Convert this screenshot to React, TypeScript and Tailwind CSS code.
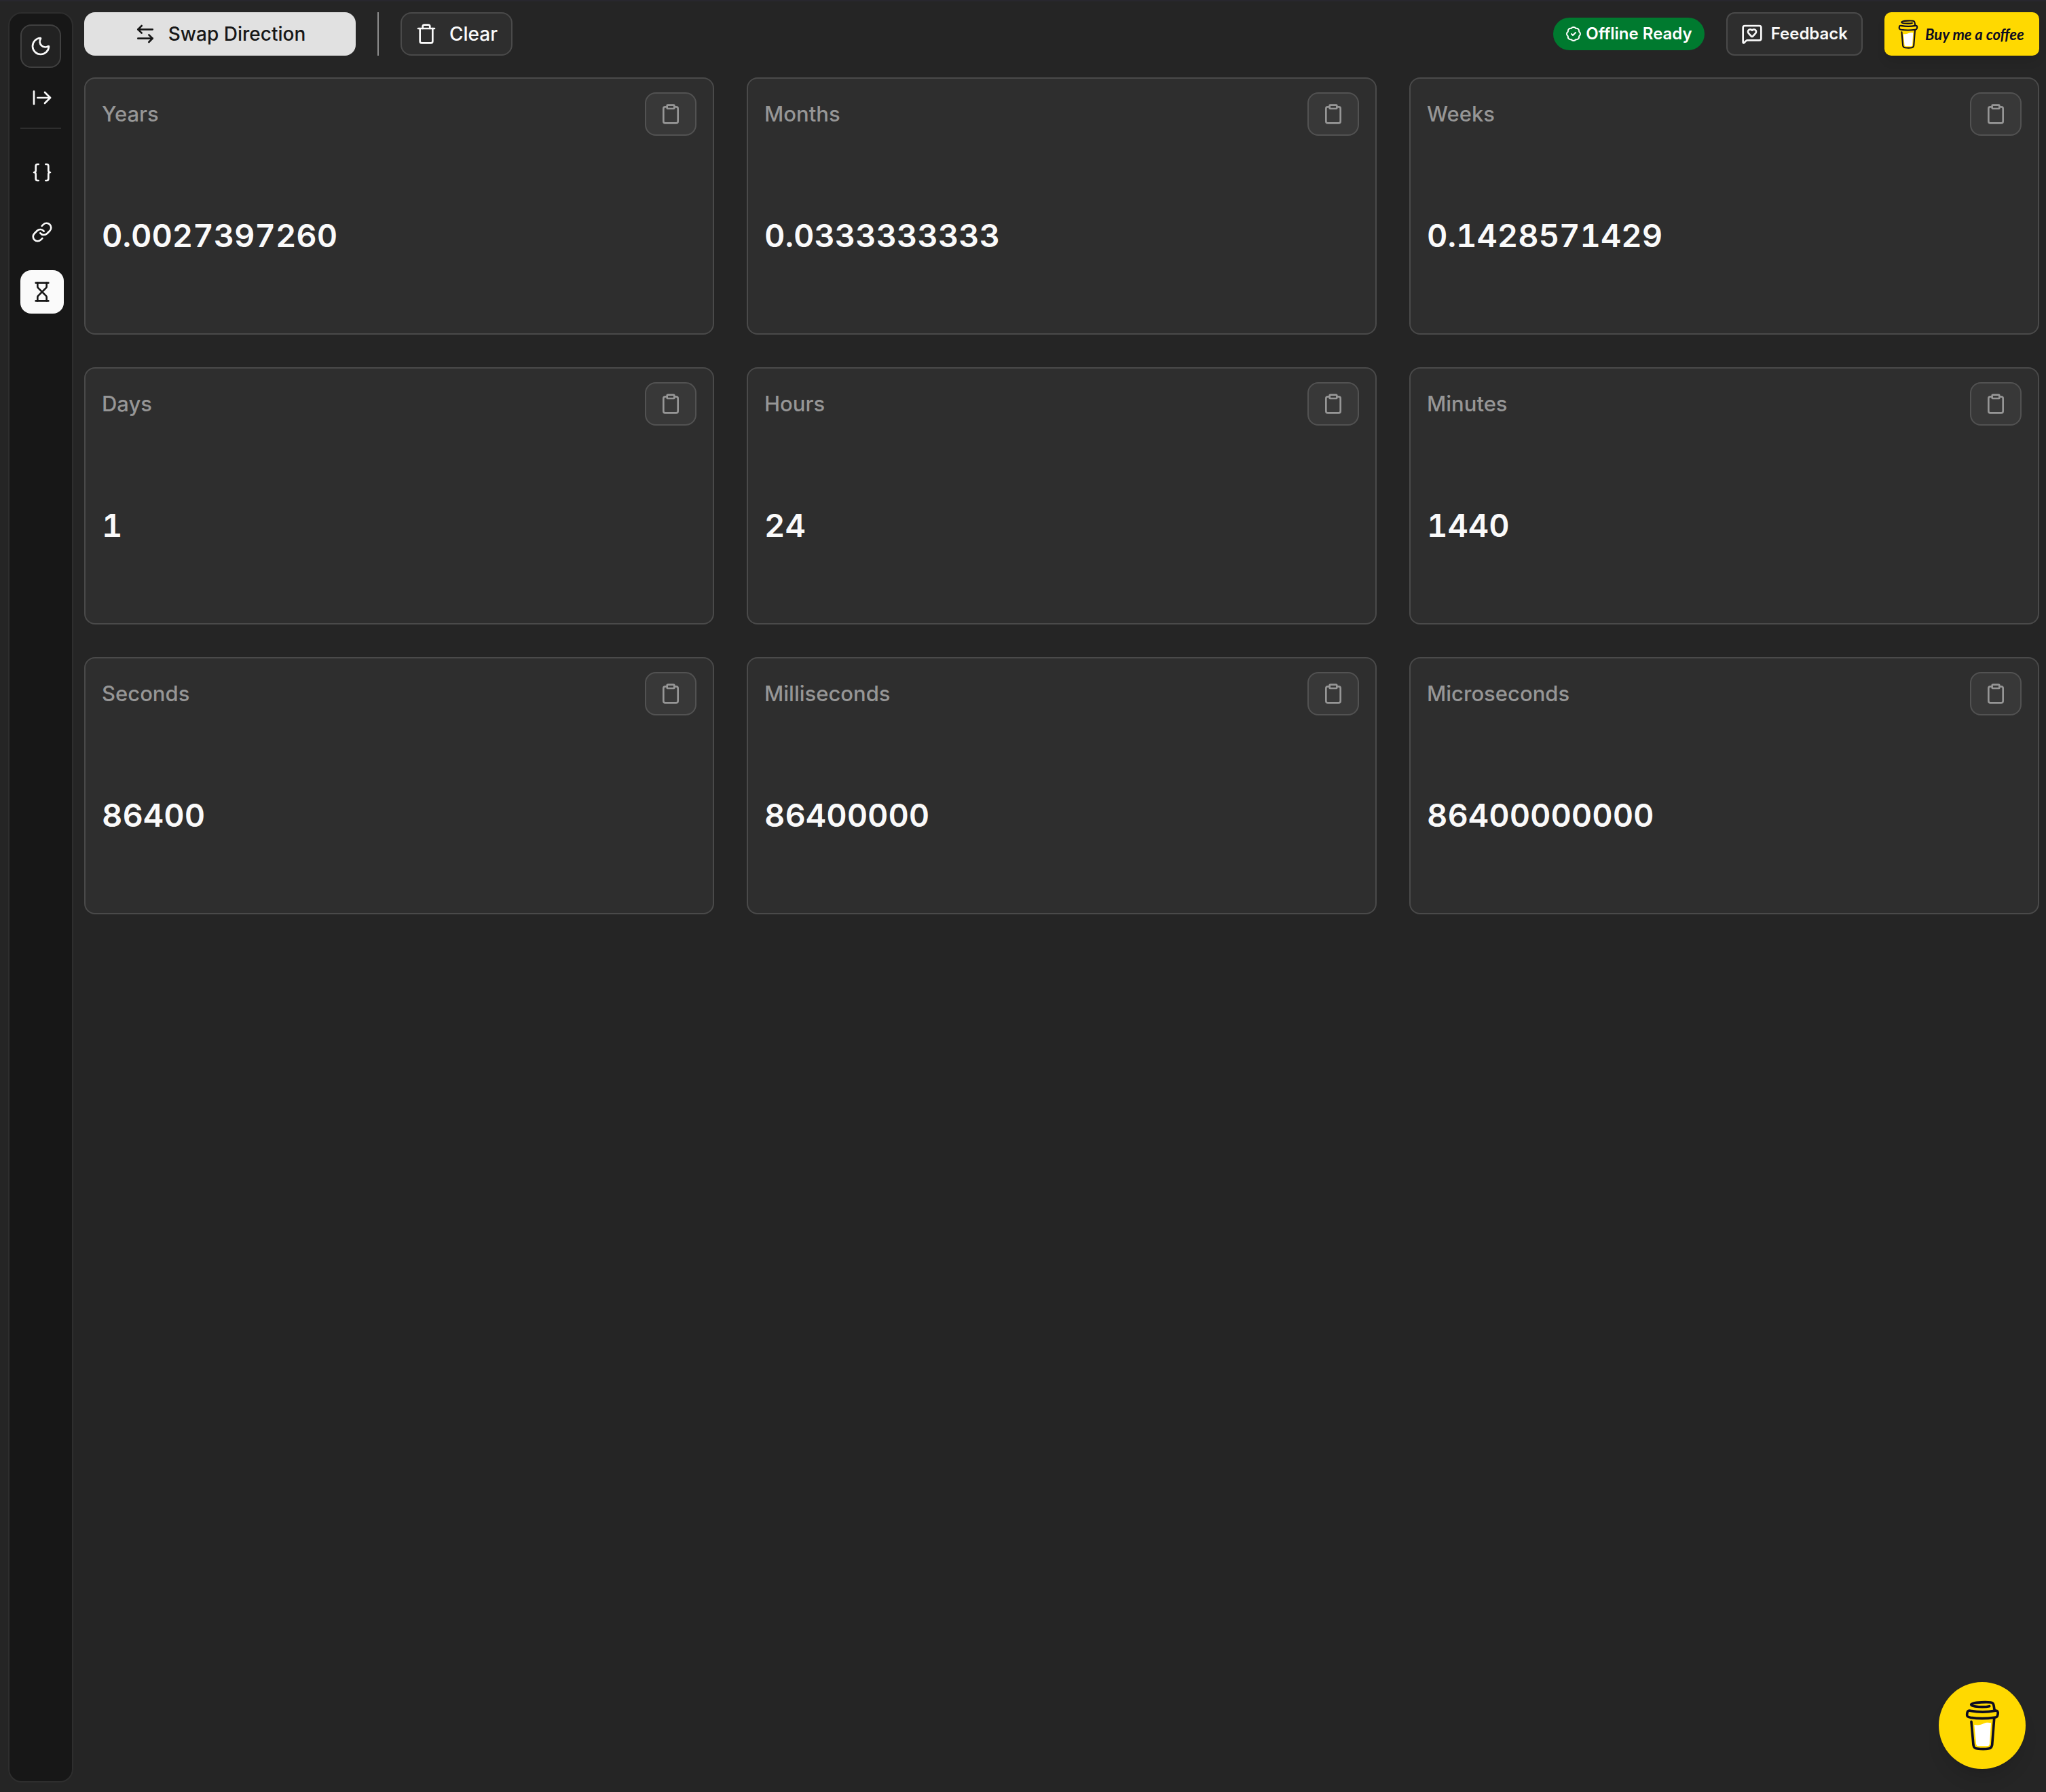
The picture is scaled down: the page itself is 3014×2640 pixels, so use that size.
import {
  ArrowLeftRight,
  ArrowRightFromLine,
  BadgeCheck,
  Braces,
  Clipboard,
  Hourglass,
  Link,
  MessageSquareHeart,
  Moon,
  Trash,
} from "lucide-react";

interface unitProperties {
  label: string;
  value: string;
}

const units: unitProperties[] = [
  { label: "Years", value: "0.0027397260" },
  { label: "Months", value: "0.0333333333" },
  { label: "Weeks", value: "0.1428571429" },
  { label: "Days", value: "1" },
  { label: "Hours", value: "24" },
  { label: "Minutes", value: "1440" },
  { label: "Seconds", value: "86400" },
  { label: "Milliseconds", value: "86400000" },
  { label: "Microseconds", value: "86400000000" },
];

const CoffeeCup = ({ className }: { className: string }) => {
  return (
    <svg viewBox="180 165 153 222" className={className} aria-hidden="true">
      <path
        fill="#fff"
        d="M220 273C240 277 250 272 262 267C272 262 284 262 294 265L288 356C287 364 284 367 276 367H240C232 367 229 363 228 356Z"
      />
      <g
        fill="none"
        stroke="#0d0c22"
        strokeWidth="11"
        strokeLinecap="round"
        strokeLinejoin="round"
      >
        <path d="M287 191C270 195 206 196 206 184C206 172 295 170 302 178C308 184 306 196 310 210" />
        <path d="M203 211C240 218 275 218 309 211C324 208 326 216 324 227C322 238 320 239 308 241C275 246 235 246 203 241C190 238 187 236 188 226C189 214 192 208 203 211Z" />
        <path d="M207 259L216 362C218 374 222 377 232 378C250 380 270 380 284 378C294 377 297 372 299 362L308 246" />
      </g>
    </svg>
  );
};

const Sidebar = () => {
  return (
    <aside className="flex w-24 shrink-0 flex-col gap-3 rounded-[20px] border-2 border-[#2e2e2e] bg-[#171717] p-4 text-[#fafafa]">
      <button
        aria-label="Toggle theme"
        className="flex h-16 w-full items-center justify-center rounded-2xl border-2 border-[#404040] bg-[#222222]"
      >
        <Moon size={32} />
      </button>
      <button
        aria-label="Expand sidebar"
        className="flex size-16 items-center justify-center rounded-2xl"
      >
        <ArrowRightFromLine size={32} />
      </button>
      <hr className="w-full border-t-2 border-[#2e2e2e]" />
      <nav className="mt-5 flex flex-col gap-6">
        <a
          href="#json"
          aria-label="JSON formatter"
          className="flex size-16 items-center justify-center rounded-2xl"
        >
          <Braces size={32} />
        </a>
        <a
          href="#url"
          aria-label="URL encoder"
          className="flex size-16 items-center justify-center rounded-2xl"
        >
          <Link size={32} />
        </a>
        <a
          href="#time"
          aria-label="Time converter"
          aria-current="page"
          className="flex size-16 items-center justify-center rounded-2xl bg-[#fafafa] text-[#171717]"
        >
          <Hourglass size={32} />
        </a>
      </nav>
    </aside>
  );
};

const Toolbar = () => {
  return (
    <header className="flex items-center justify-between">
      <div className="flex items-center gap-8">
        <button className="flex h-16 w-[400px] items-center justify-center gap-[18px] rounded-2xl bg-[#e1e1e1] text-[28px] font-medium text-[#171717]">
          <ArrowLeftRight size={32} />
          Swap Direction
        </button>
        <div className="h-16 w-[2px] bg-[#8e8e8e]"></div>
        <button className="flex h-16 items-center gap-[18px] rounded-2xl border-2 border-[#4a4a4a] bg-[#2e2e2e] px-5 text-[28px] font-medium text-[#fafafa]">
          <Trash size={32} />
          Clear
        </button>
      </div>
      <div className="flex items-center gap-8">
        <span className="flex h-12 items-center gap-[6px] rounded-full bg-[#007a2f] px-[18px] text-[24px] font-semibold text-white">
          <BadgeCheck size={24} />
          Offline Ready
        </span>
        <button className="flex h-16 items-center gap-3 rounded-xl border-2 border-[#4a4a4a] bg-[#2e2e2e] px-5 text-[24px] font-semibold text-[#fafafa]">
          <MessageSquareHeart size={32} />
          Feedback
        </button>
        <a
          href="#coffee"
          className="flex h-16 w-[228px] items-center gap-[10px] rounded-[10px] bg-[#ffd900] pl-5 font-['Lato',sans-serif] text-[22px] font-bold whitespace-nowrap text-[#0d0c22] italic shadow-lg"
        >
          <CoffeeCup className="h-[43px] w-[30px] shrink-0" />
          Buy me a coffee
        </a>
      </div>
    </header>
  );
};

const UnitCard = ({ label, value }: unitProperties) => {
  return (
    <section className="flex h-[379px] flex-col rounded-2xl border-2 border-[#4a4a4a] bg-[#2e2e2e] px-6 py-5">
      <div className="flex items-center justify-between">
        <h2 className="text-[31px] font-medium text-[#969696]">{label}</h2>
        <button
          aria-label={`Copy ${label}`}
          className="flex h-16 w-[76px] items-center justify-center rounded-2xl border-2 border-[#525252] bg-[#383838] text-[#969696]"
        >
          <Clipboard size={32} />
        </button>
      </div>
      <div className="flex flex-1 items-center pt-6">
        <p className="text-[47px] font-semibold text-[#fafafa] tabular-nums">
          {value}
        </p>
      </div>
    </section>
  );
};

export default function App() {
  return (
    <div className="flex min-h-screen gap-4 border-t-2 border-[#28272e] bg-[#252525] pt-4 pr-[10px] pb-[14px] pl-3 font-['Inter',sans-serif]">
      <Sidebar />
      <main className="flex flex-1 flex-col gap-8">
        <Toolbar />
        <div className="grid grid-cols-3 gap-12">
          {units.map((unit) => (
            <UnitCard key={unit.label} {...unit} />
          ))}
        </div>
      </main>
      <button
        aria-label="Buy me a coffee"
        className="fixed right-[30px] bottom-[34px] flex size-32 items-center justify-center rounded-full bg-[#ffd900] shadow-xl"
      >
        <CoffeeCup className="h-[74px] w-[51px]" />
      </button>
    </div>
  );
}
